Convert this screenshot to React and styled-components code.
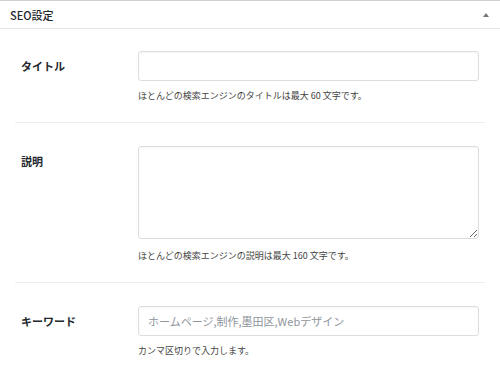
import React from "react";
import styled, { createGlobalStyle } from "styled-components";

const GlobalStyle = createGlobalStyle`
  body {
    margin: 0;
    background: #fff;
    font-family: "Noto Sans CJK JP", "Noto Sans", sans-serif;
    color: #23282d;
  }
`;

const fields = [
  {
    label: "タイトル",
    type: "input",
    hint: "ほとんどの検索エンジンのタイトルは最大 60 文字です。",
  },
  {
    label: "説明",
    type: "textarea",
    hint: "ほとんどの検索エンジンの説明は最大 160 文字です。",
  },
  {
    label: "キーワード",
    type: "input",
    placeholder: "ホームページ,制作,墨田区,Webデザイン",
    hint: "カンマ区切りで入力します。",
  },
];

const App = () => {
  return (
    <>
      <GlobalStyle />
      <Panel>
        <Header>
          <h2>SEO設定</h2>
          <Toggle />
        </Header>
        <Body>
          {fields.map((f, i) => (
            <Row key={i} first={i === 0} last={i === fields.length - 1}>
              <Label>{f.label}</Label>
              <Field>
                {f.type === "textarea" ? (
                  <TextArea rows={6} />
                ) : (
                  <TextInput type="text" placeholder={f.placeholder || ""} />
                )}
                <Hint>{f.hint}</Hint>
              </Field>
            </Row>
          ))}
        </Body>
      </Panel>
    </>
  );
};

export default App;

const Panel = styled.div`
  border-top: 1px solid #ccd0d4;
  background: #fff;
`;

const Header = styled.div`
  display: flex;
  align-items: center;
  justify-content: space-between;
  height: 27px;
  padding: 0 11px 0 10px;
  border-bottom: 1px solid #e2e4e7;

  h2 {
    margin: 0;
    font-size: 11px;
    font-weight: 500;
    color: #23282d;
    line-height: 1;
    padding-top: 2px;
  }
`;

const Toggle = styled.span`
  width: 0;
  height: 0;
  border-left: 3px solid transparent;
  border-right: 3px solid transparent;
  border-bottom: 4px solid #72777c;
  margin-top: 1px;
`;

const Body = styled.div`
  padding: 0 15px;
`;

const Row = styled.div`
  display: flex;
  padding: ${(p) => (p.first ? "22px" : "23px")} 6px 19px;
  border-bottom: ${(p) => (p.last ? "none" : "1px solid #eeeeee")};
`;

const Label = styled.div`
  width: 117px;
  flex-shrink: 0;
  font-size: 11px;
  font-weight: 700;
  line-height: 30px;
  height: 30px;
  color: #23282d;
`;

const Field = styled.div`
  flex: 1;
  display: flex;
  flex-direction: column;
`;

const TextInput = styled.input`
  box-sizing: border-box;
  width: 100%;
  height: 30px;
  margin: 0;
  padding: 0 9px;
  border: 1px solid #dddddd;
  border-radius: 3px;
  box-shadow: inset 0 1px 2px rgba(0, 0, 0, 0.04);
  font-family: inherit;
  font-size: 11px;
  color: #32373c;
  outline: none;

  &::placeholder {
    color: #8f959b;
  }
`;

const TextArea = styled.textarea`
  display: block;
  box-sizing: border-box;
  width: 100%;
  height: 93px;
  margin: 0 0 2px;
  padding: 6px 9px;
  border: 1px solid #dddddd;
  border-radius: 3px;
  box-shadow: inset 0 1px 2px rgba(0, 0, 0, 0.04);
  font-family: inherit;
  font-size: 11px;
  outline: none;
`;

const Hint = styled.p`
  margin: 8px 0 0;
  font-size: 9px;
  line-height: 14px;
  color: #444;
`;
